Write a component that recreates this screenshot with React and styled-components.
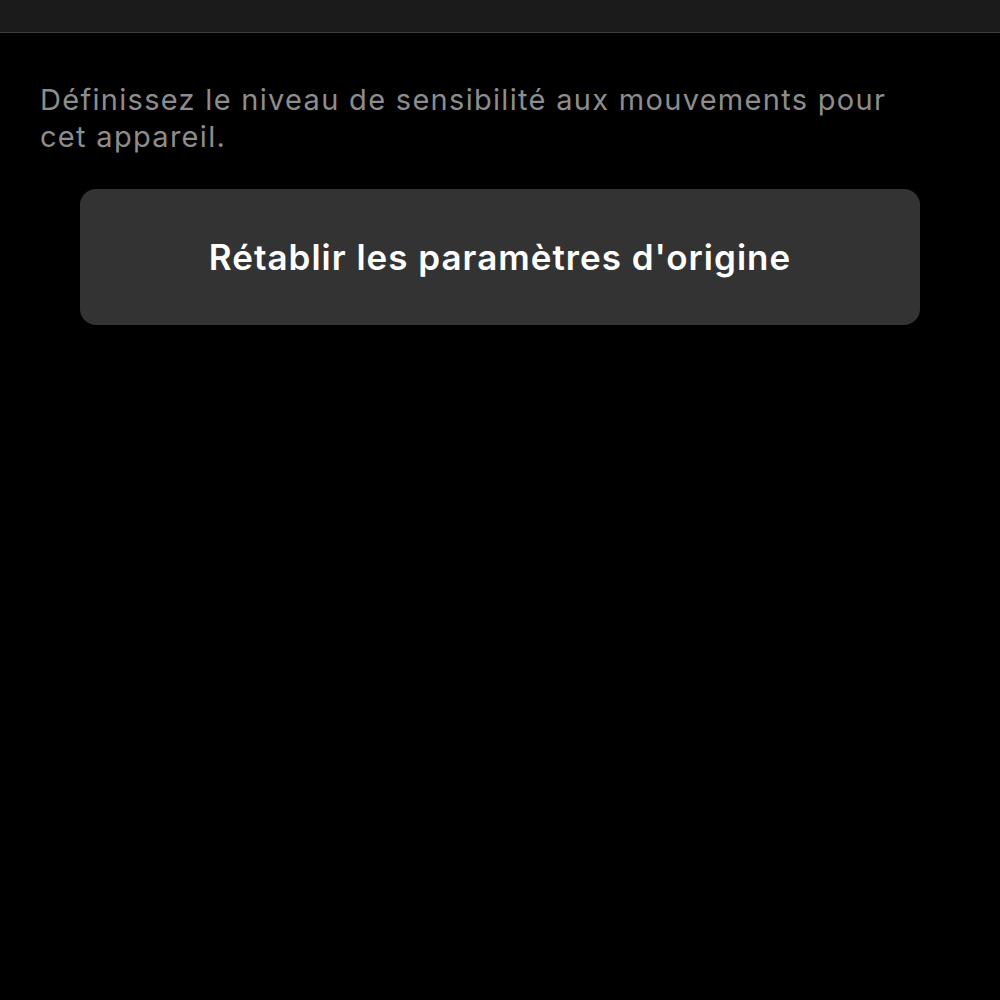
import React from "react";
import styled, { createGlobalStyle } from "styled-components";

const Global = createGlobalStyle`
  html, body { margin: 0; padding: 0; background: #000; }
  body { font-family: Inter, "Noto Sans", sans-serif; -webkit-font-smoothing: antialiased; }
`;

const Page = styled.div`
  width: 1000px;
  height: 1000px;
  background: #000;
  display: flex;
  flex-direction: column;
`;

const TopBar = styled.div`
  height: 32px;
  background: #1b1b1b;
  border-bottom: 1px solid #3d3d3d;
  flex-shrink: 0;
`;

const Content = styled.div`
  padding: 48px 40px 0 40px;
  display: flex;
  flex-direction: column;
`;

const Footnote = styled.p`
  margin: 0;
  color: #8d8d8d;
  font-size: 29px;
  letter-spacing: 1.3px;
  line-height: 37px;
  font-weight: 400;
  max-width: 870px;
`;

const ResetButton = styled.button`
  margin: 34px 40px 0 40px;
  height: 136px;
  border: none;
  border-radius: 16px;
  background: #333333;
  color: #fff;
  font-family: Inter, "Noto Sans", sans-serif;
  font-size: 35px;
  letter-spacing: 1px;
  font-weight: 600;
  display: flex;
  align-items: center;
  justify-content: center;
  cursor: pointer;
`;

export default function App() {
  return (
    <Page>
      <Global />
      <TopBar />
      <Content>
        <Footnote>
          Définissez le niveau de sensibilité aux mouvements pour cet appareil.
        </Footnote>
        <ResetButton>Rétablir les paramètres d'origine</ResetButton>
      </Content>
    </Page>
  );
}
